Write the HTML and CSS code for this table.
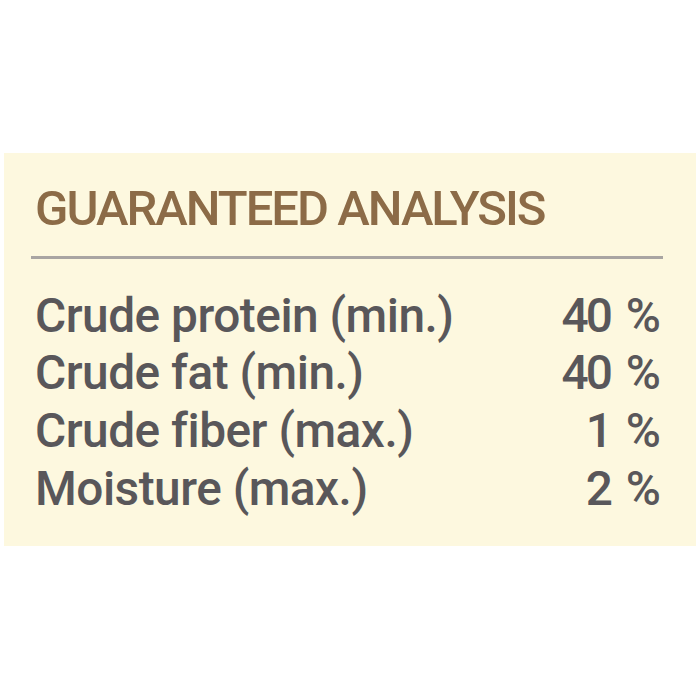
FILE: index.html
```html
<!DOCTYPE html>
<html lang="en">
<head>
  <meta charset="UTF-8">
  <title>Guaranteed Analysis</title>
  <link rel="stylesheet" href="styles.css">
</head>
<body>
  <div class="panel">
    <h2 class="title">GUARANTEED ANALYSIS</h2>
    <div class="rule"></div>

    <!-- analysis rows -->
    <div class="rows">
      <div class="row"><span>Crude protein (min.)</span><span class="value">40 %</span></div>
      <div class="row"><span>Crude fat (min.)</span><span class="value">40 %</span></div>
      <div class="row"><span>Crude fiber (max.)</span><span class="value">1 %</span></div>
      <div class="row"><span>Moisture (max.)</span><span class="value">2 %</span></div>
    </div>
  </div>
</body>
</html>
```

FILE: styles.css
```css
body {
  margin: 0;
  background: #fff;
  font-family: Roboto, 'Liberation Sans', sans-serif;
}
.panel {
  margin: 153px 4px 0 4px;
  height: 393px;
  box-sizing: border-box;
  padding: 30.6px 33px 0 27px;
  background: #fdf8df;
}
.title {
  margin: 0 0 0 4px;
  font-size: 49px;
  line-height: 49px;
  font-weight: 500;
  letter-spacing: -2px;
  color: #8c6b47;
}
.rule {
  height: 3px;
  margin-top: 23.4px;
  background: #a9a5a2;
}
.rows {
  margin-top: 28.7px;
  padding: 0 2px 0 4px;
}
.row {
  display: flex;
  justify-content: space-between;
  font-size: 47.8px;
  line-height: 57.7px;
  font-weight: 500;
  letter-spacing: -0.5px;
  color: #59575a;
}
.value {
  letter-spacing: -3px;
  word-spacing: 7px;
  padding-right: 3px;
}
```
